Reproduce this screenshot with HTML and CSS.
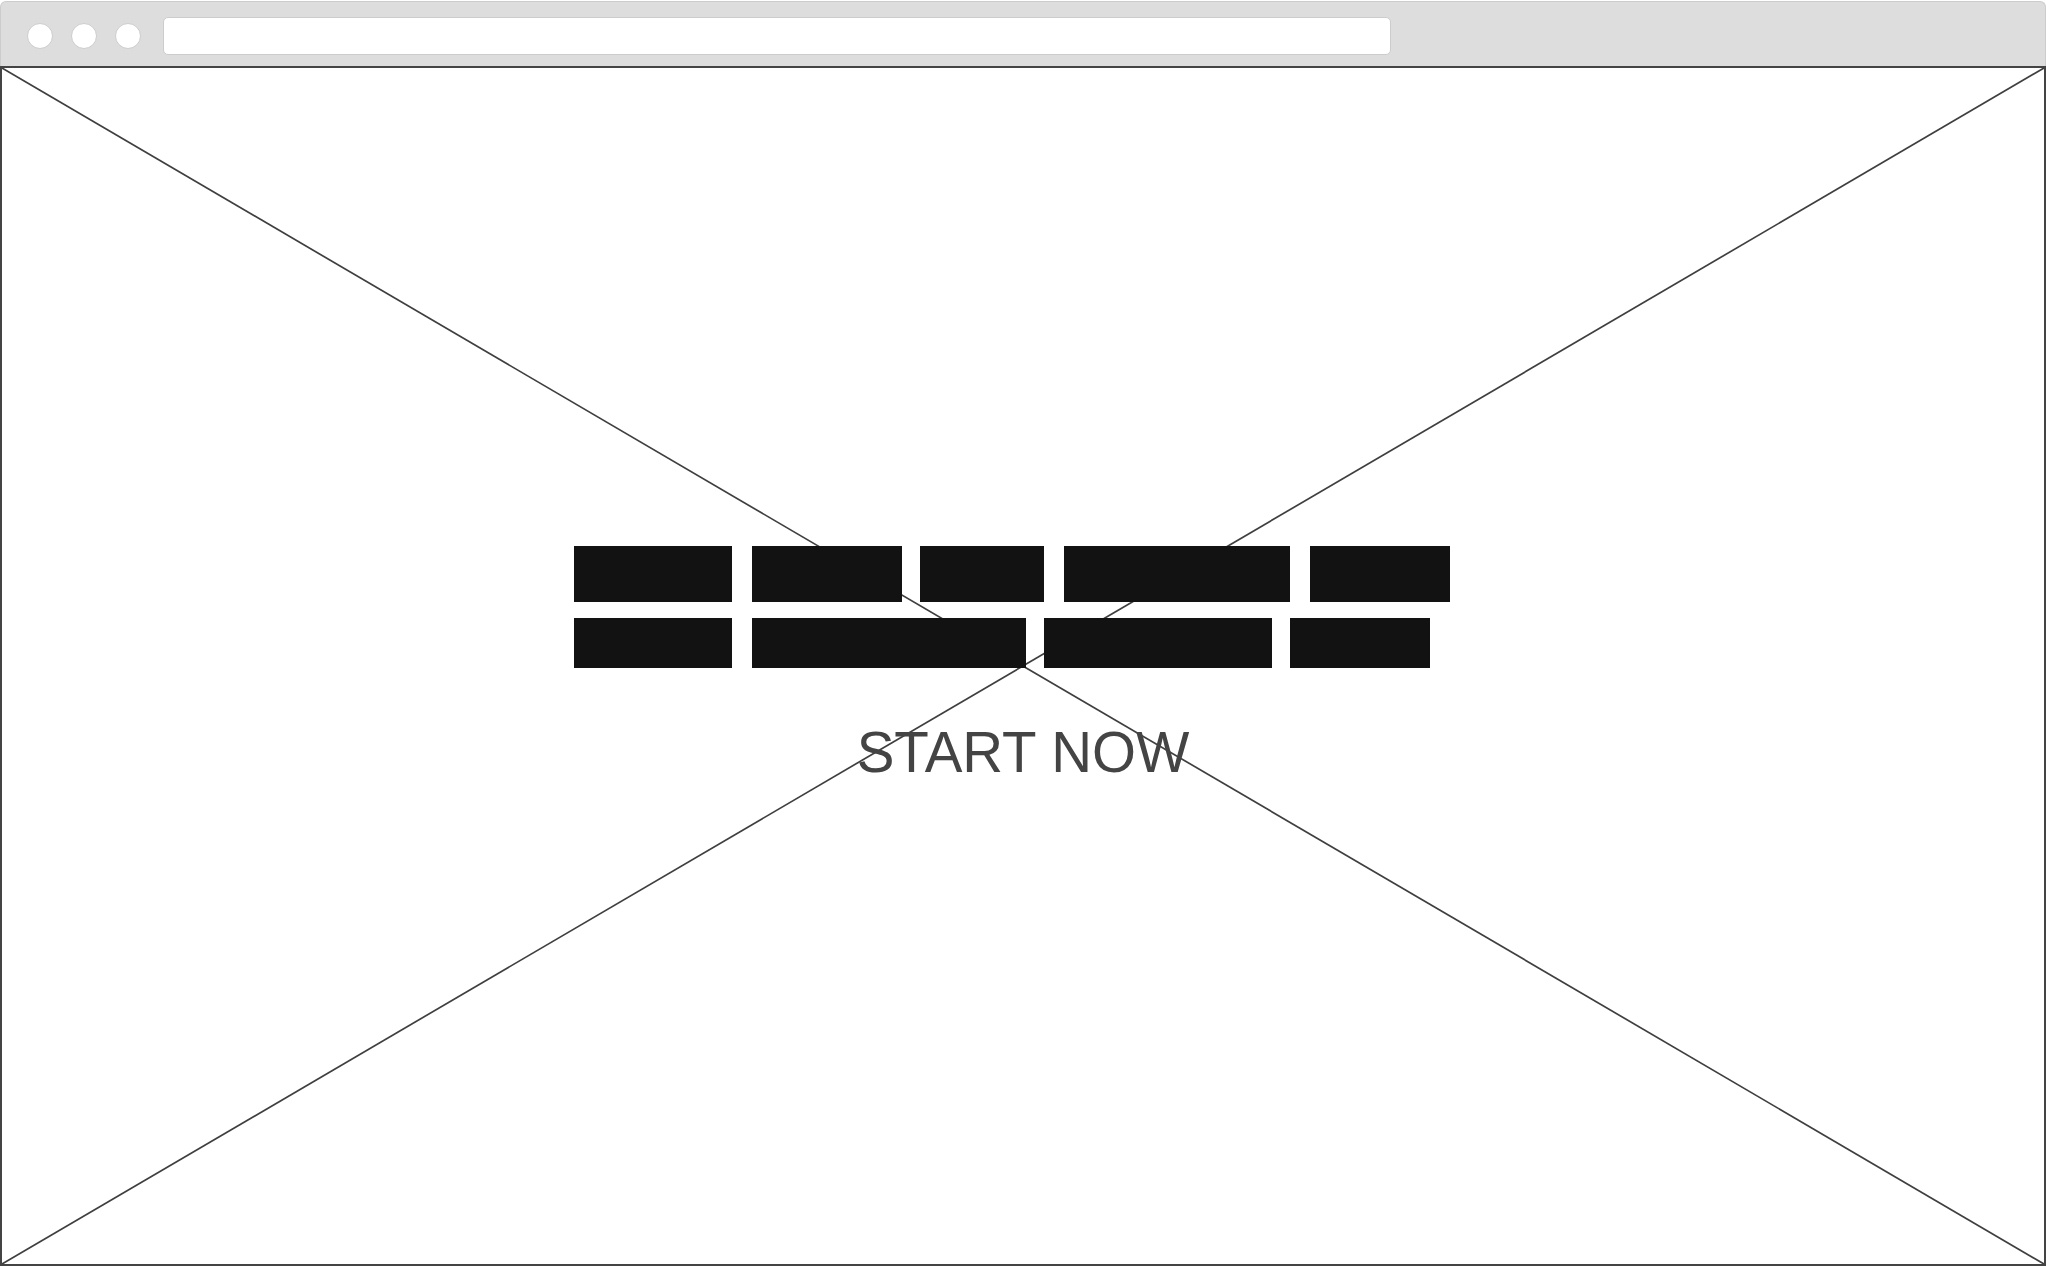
FILE: index.html
```html
<!DOCTYPE html>
<html lang="en">
<head>
<meta charset="utf-8">
<title>Wireframe</title>
<link rel="stylesheet" href="styles.css">
</head>
<body>
<div class="window">
  <div class="titlebar">
    <span class="dot"></span>
    <span class="dot"></span>
    <span class="dot"></span>
    <div class="url"></div>
  </div>
  <div class="content">
    <svg class="cross" viewBox="0 0 100 100" preserveAspectRatio="none" aria-hidden="true">
      <line x1="0" y1="0" x2="100" y2="100" vector-effect="non-scaling-stroke"/>
      <line x1="100" y1="0" x2="0" y2="100" vector-effect="non-scaling-stroke"/>
    </svg>
    <div class="hero">
      <div class="headline">
        <div class="row row-1">
          <span class="blk" style="width:158px"></span>
          <span class="blk" style="width:150px"></span>
          <span class="blk gap-s" style="width:124px"></span>
          <span class="blk" style="width:226px"></span>
          <span class="blk" style="width:140px"></span>
        </div>
        <div class="row row-2">
          <span class="blk" style="width:158px"></span>
          <span class="blk" style="width:274px"></span>
          <span class="blk gap-s" style="width:228px"></span>
          <span class="blk gap-s" style="width:140px"></span>
        </div>
      </div>
      <div class="cta">START NOW</div>
    </div>
  </div>
</div>
</body>
</html>
```

FILE: styles.css
```css
html, body {
  margin: 0;
  padding: 0;
  background: #ffffff;
}

.window {
  width: 2046px;
  height: 1266px;
  display: flex;
  flex-direction: column;
  box-sizing: border-box;
  padding-top: 1px;
}

.titlebar {
  height: 65px;
  box-sizing: border-box;
  background: #dddddd;
  border: 1px solid #cccccc;
  border-bottom: none;
  border-radius: 6px 6px 0 0;
  display: flex;
  align-items: center;
  padding: 4px 0 0 26px;
}

.dot {
  width: 26px;
  height: 26px;
  box-sizing: border-box;
  border-radius: 50%;
  background: #ffffff;
  border: 1.5px solid #cccccc;
  margin-right: 18px;
  flex: none;
}

.dot:nth-child(3) {
  margin-right: 22px;
}

.url {
  width: 1228px;
  height: 38px;
  box-sizing: border-box;
  background: #ffffff;
  border: 1.5px solid #cccccc;
  border-radius: 5px;
}

.content {
  flex: 1;
  position: relative;
  border: 2px solid #444444;
  display: flex;
  flex-direction: column;
  align-items: center;
  justify-content: center;
}

.cross {
  position: absolute;
  left: 0;
  top: 0;
  width: 100%;
  height: 100%;
}

.cross line {
  stroke: #3f3f3f;
  stroke-width: 1.7;
}

.hero {
  position: relative;
  display: flex;
  flex-direction: column;
  align-items: center;
  margin-top: -1px;
}

.headline {
  width: 898px;
  display: flex;
  flex-direction: column;
  gap: 16px;
}

.row {
  display: flex;
  gap: 20px;
}

.row-1 .blk {
  height: 56px;
}

.row-2 .blk {
  height: 50px;
}

.blk {
  display: block;
  background: #121212;
}

.blk.gap-s {
  margin-left: -2px;
}

.cta {
  margin-top: 52px;
  font-family: "Liberation Sans", Arial, sans-serif;
  font-size: 56.5px;
  line-height: normal;
  color: #444444;
}
```
